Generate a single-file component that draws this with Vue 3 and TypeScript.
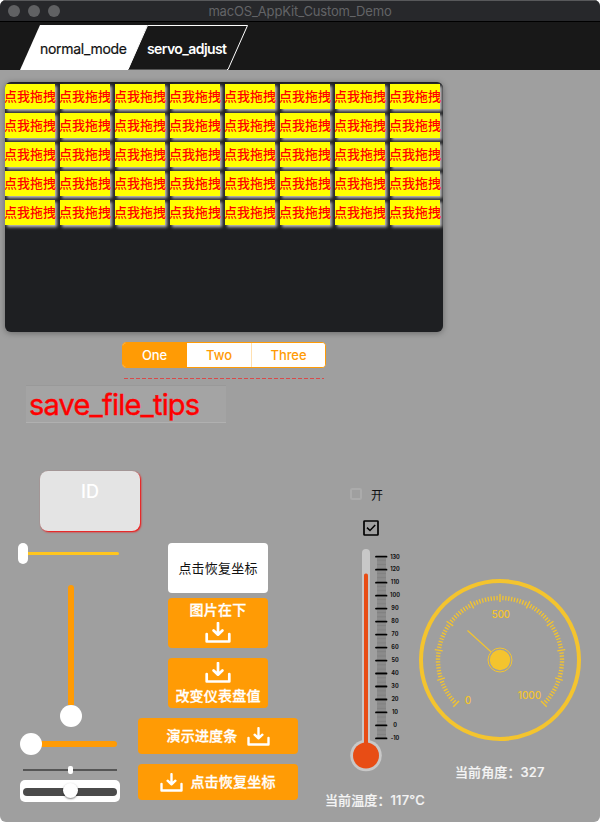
<script setup lang="ts">
import { ref } from 'vue'

interface Tick {
  pos: number
  major: boolean
}

const cells = Array.from({ length: 40 }, (_, i) => i)
const segments = ['One', 'Two', 'Three']
const activeSegment = ref(0)

const temperature = ref(117)
const angle = ref(327)

const thermoTicks: Tick[] = Array.from({ length: 141 }, (_, i) => ({
  pos: 11.7 + i * 1.298,
  major: i % 10 === 0,
}))
const thermoLabels = Array.from({ length: 15 }, (_, i) => ({
  text: String(130 - i * 10),
  y: 13.5 + i * 12.98,
}))
const dialTicks: Tick[] = Array.from({ length: 101 }, (_, i) => ({
  pos: -135 + i * 2.7,
  major: i % 10 === 0,
}))
</script>

<template>
  <div class="window">
    <header class="titlebar">
      <div class="lights"><i></i><i></i><i></i></div>
      <span class="title">macOS_AppKit_Custom_Demo</span>
    </header>

    <nav class="tabs">
      <svg width="260" height="48" viewBox="0 0 260 48">
        <polygon points="147.5,3.5 247.5,3.5 228,47.5 128,47.5" fill="#181818" stroke="#fff" stroke-width="1" />
        <path d="M128 47.5H227" stroke="#555" stroke-width="1" />
        <polygon points="20,48 40,3 147.5,3 128,48" fill="#fff" />
        <text x="40" y="32" textLength="87" class="tab-on">normal_mode</text>
        <text x="147" y="32" textLength="80" class="tab-off">servo_adjust</text>
      </svg>
    </nav>

    <main class="content">
      <section class="panel">
        <div v-for="c in cells" :key="c" class="cell"><span>点我拖拽</span></div>
      </section>

      <div class="segmented">
        <button
          v-for="(s, i) in segments"
          :key="s"
          :class="['segment', { active: i === activeSegment }]"
          @click="activeSegment = i"
        >{{ s }}</button>
      </div>
      <svg class="dashes" width="200" height="1"><path d="M0 .5H200" stroke="#d84a4a" stroke-dasharray="4 2" /></svg>

      <div class="tips">save_file_tips</div>

      <section class="lower">
        <div class="sliders">
          <div class="id-card">ID</div>
          <div class="slider pill"><span class="knob"></span><span class="track"></span></div>
          <div class="slider vertical"><span class="track"></span><span class="knob"></span></div>
          <div class="slider round"><span class="knob"></span><span class="track"></span></div>
          <div class="slider thin"><span class="track"></span><span class="knob"></span><span class="track"></span></div>
          <div class="slider boxed"><span class="track"><span class="knob"></span></span></div>
        </div>

        <div class="buttons">
          <button class="btn plain">点击恢复坐标</button>
          <button class="btn square text-top">
            <span>图片在下</span>
            <svg class="icon" width="26" height="21" viewBox="0 0 26 21"><path d="M1.7 12V19.5H24.3V12M13 1V12.5M8.6 8.5L13 12.7L17.4 8.5" /></svg>
          </button>
          <button class="btn square text-bottom">
            <svg class="icon" width="26" height="21" viewBox="0 0 26 21"><path d="M1.7 12V19.5H24.3V12M13 1V12.5M8.6 8.5L13 12.7L17.4 8.5" /></svg>
            <span>改变仪表盘值</span>
          </button>
          <button class="btn wide">
            <span>演示进度条</span>
            <svg class="icon" width="23" height="19" viewBox="0 0 26 21"><path d="M1.7 12V19.5H24.3V12M13 1V12.5M8.6 8.5L13 12.7L17.4 8.5" /></svg>
          </button>
          <button class="btn wide last">
            <svg class="icon" width="23" height="19" viewBox="0 0 26 21"><path d="M1.7 12V19.5H24.3V12M13 1V12.5M8.6 8.5L13 12.7L17.4 8.5" /></svg>
            <span>点击恢复坐标</span>
          </button>
        </div>

        <div class="thermo">
          <label class="switch"><i></i><span>开</span></label>
          <svg class="check" width="16" height="16" viewBox="0 0 16 16">
            <rect x="1" y="1" width="14" height="14" rx=".6" fill="none" stroke="#000" stroke-width="1.7" />
            <path d="M4 7.6L7 10.5L12.2 5.1" fill="none" stroke="#000" stroke-width="1.5" />
          </svg>
          <svg class="thermometer" width="60" height="230" viewBox="0 0 60 230">
            <rect x="17" y="4" width="8" height="200" rx="4" fill="#c8c8c8" />
            <circle cx="21" cy="210.5" r="15.8" fill="#c8c8c8" />
            <rect x="19" y="28.5" width="4" height="180" rx="1.8" fill="#e84d15" />
            <circle cx="21" cy="210.5" r="13" fill="#e84d15" />
            <line
              v-for="(t, i) in thermoTicks"
              :key="i"
              :x1="t.major ? 31 : 32"
              :x2="t.major ? 41.5 : 41"
              :y1="t.pos"
              :y2="t.pos"
              :class="t.major ? 'tmajor' : 'tminor'"
            />
            <text v-for="l in thermoLabels" :key="l.text" x="50" :y="l.y" class="tlabel">{{ l.text }}</text>
          </svg>
          <p class="caption">当前温度：{{ temperature }}°C</p>
        </div>

        <div class="dial">
          <svg width="164" height="164" viewBox="-82 -82 164 164">
            <circle r="79" fill="none" stroke="#f4c42e" stroke-width="4" />
            <line
              v-for="(t, i) in dialTicks"
              :key="i"
              x1="0"
              x2="0"
              :y1="t.major ? -66 : -64.2"
              :y2="t.major ? -58 : -59.8"
              :transform="`rotate(${t.pos})`"
              stroke="#f4c42e"
              :stroke-width="t.major ? 1.4 : 1.3"
            />
            <path d="M0 0L-32.5 -29.5" stroke="#f4c42e" stroke-width="1.2" />
            <circle r="12" fill="#9f9f9f" stroke="#f4c42e" stroke-width="1" />
            <circle r="10.2" fill="#f4c42e" />
            <text x="0.8" y="-42" textLength="18.5">500</text>
            <text x="-32" y="43.5">0</text>
            <text x="29.5" y="38.5" textLength="23.5">1000</text>
          </svg>
          <p class="caption">当前角度：{{ angle }}</p>
        </div>
      </section>
    </main>
  </div>
</template>

<style>
body {
  background: #fff;
}
</style>

<style scoped>
.window {
  width: 600px;
  height: 822px;
  overflow: hidden;
  border-radius: 6px;
  background: #9f9f9f;
  font-family: Inter, "Noto Sans CJK SC", sans-serif;
  display: flex;
  flex-direction: column;
}
.titlebar {
  height: 22px;
  box-sizing: border-box;
  background: #27282b;
  border-top: 1px solid #58595b;
  border-bottom: 1px solid #000;
  display: grid;
  grid-template-columns: 68px 1fr 68px;
  align-items: center;
}
.lights {
  display: flex;
  gap: 8px;
  padding-left: 8px;
}
.lights i {
  width: 12px;
  height: 12px;
  border-radius: 50%;
  background: #606163;
}
.title {
  text-align: center;
  font-size: 13px;
  line-height: 20px;
  color: #636467;
  letter-spacing: -0.15px;
}
.tabs {
  height: 48px;
  background: #181818;
}
.tabs svg {
  display: block;
}
.tabs text {
  font-size: 14px;
}
.tab-on {
  fill: #111;
  stroke: #111;
  stroke-width: 0.2px;
}
.tab-off {
  fill: #fff;
  font-weight: 600;
}
.content {
  flex: 1;
  display: flex;
  flex-direction: column;
  align-items: flex-start;
}
.panel {
  width: 438px;
  height: 250px;
  box-sizing: border-box;
  margin: 12px 0 0 5px;
  padding-top: 2px;
  border-radius: 6px;
  overflow: hidden;
  background: #1e1f22;
  box-shadow: 0 1px 6px rgba(0, 0, 0, 0.35);
  display: grid;
  grid-template-columns: repeat(8, 50px);
  grid-auto-rows: 25px;
  gap: 4px 5px;
  align-content: start;
}
.cell {
  background: #ff0;
  box-shadow: 2px 2px 3px #c4c4c4;
  color: #f00;
  font-size: 13px;
  font-weight: 500;
  line-height: 25px;
  white-space: nowrap;
  display: flex;
  justify-content: center;
}
.segmented {
  width: 204px;
  height: 26px;
  box-sizing: border-box;
  margin: 10px 0 0 122px;
  border: 1px solid #ff9b05;
  border-radius: 4px;
  overflow: hidden;
  background: #fff;
  display: grid;
  grid-template-columns: 64px 65px 1fr;
}
.segment {
  padding: 0;
  border: 0;
  border-right: 1px solid #ffe0b0;
  background: #fff;
  color: #ff9b05;
  font: 500 13px/24px Inter, sans-serif;
  letter-spacing: -0.1px;
}
.segment:last-child {
  border-right: 0;
}
.segment.active {
  background: #ff9b05;
  border-right-color: #ff9b05;
  color: #fff;
}
.dashes {
  display: block;
  margin: 10px 0 0 124px;
}
.tips {
  width: 200px;
  height: 38px;
  box-sizing: border-box;
  margin: 6px 0 0 26px;
  padding-left: 3px;
  background: #a4a4a4;
  border-top: 1px solid #999;
  border-bottom: 1px solid #b0b0b0;
  color: #f00;
  font-size: 29px;
  line-height: 37px;
  letter-spacing: -0.8px;
  -webkit-text-stroke: 0.4px #f00;
}
.lower {
  width: 600px;
  height: 374px;
  margin-top: 25px;
  display: grid;
  grid-template-columns: 138px 160px 120px 182px;
}
.sliders {
  display: flex;
  flex-direction: column;
  align-items: flex-start;
  padding-top: 23px;
}
.id-card {
  width: 100px;
  height: 60px;
  flex: none;
  margin-left: 40px;
  border-radius: 8px;
  background: #e4e4e4;
  box-shadow: 1px 1px 2px #f00;
  color: #fff;
  font-size: 18px;
  font-weight: 500;
  line-height: 42px;
  text-align: center;
}
.slider {
  display: flex;
  align-items: center;
}
.knob {
  flex: none;
  background: #fff;
}
.pill {
  margin: 12px 0 0 18px;
}
.pill .knob {
  width: 10px;
  height: 21px;
  border-radius: 5px;
}
.pill .track {
  width: 91px;
  height: 3px;
  border-radius: 0 2px 2px 0;
  background: #ffc61e;
}
.vertical {
  flex-direction: column;
  margin: 21px 0 0 60px;
}
.vertical .track {
  width: 6px;
  height: 120px;
  border-radius: 3px 3px 0 0;
  background: #ff9b05;
}
.vertical .knob,
.round .knob {
  width: 22px;
  height: 22px;
  border-radius: 50%;
}
.round {
  margin: 6px 0 0 20px;
}
.round .knob {
  z-index: 1;
}
.round .track {
  width: 78px;
  height: 6px;
  margin-left: -3px;
  border-radius: 0 3px 3px 0;
  background: #ff9b05;
}
.thin {
  margin: 11px 0 0 23px;
}
.thin .track {
  width: 44.5px;
  height: 2px;
  background: #555;
}
.thin .knob {
  width: 5px;
  height: 8px;
  border-radius: 2px;
}
.boxed {
  width: 100px;
  height: 22px;
  margin: 6px 0 0 20px;
  border-radius: 5px;
  background: #fff;
  justify-content: center;
}
.boxed .track {
  width: 94px;
  height: 8px;
  margin-top: 2px;
  border-radius: 4px;
  background: #4b4b4b;
  display: flex;
  align-items: center;
  justify-content: center;
}
.boxed .knob {
  width: 15px;
  height: 15px;
  margin-top: -3px;
  border-radius: 50%;
  box-shadow: 0 1px 2px rgba(0, 0, 0, 0.5);
}
.buttons {
  padding-top: 95px;
  display: flex;
  flex-direction: column;
  align-items: center;
}
.btn {
  flex: none;
  box-sizing: border-box;
  padding: 0;
  border: 0;
  border-radius: 4px;
  background: #ff9b05;
  color: #fff;
  font: 500 14px/20px Inter, "Noto Sans CJK SC", sans-serif;
  letter-spacing: 0.2px;
  -webkit-text-stroke: 0.3px currentColor;
  display: flex;
  align-items: center;
  justify-content: center;
}
.icon {
  fill: none;
  stroke: #fff;
  stroke-width: 2.7;
  stroke-linejoin: round;
  stroke-linecap: round;
}
.plain {
  width: 100px;
  height: 50px;
  background: #fff;
  color: #111;
  font-size: 13px;
  font-weight: 400;
  -webkit-text-stroke-width: 0;
}
.square {
  width: 100px;
  height: 50px;
  flex-direction: column;
}
.text-top {
  margin-top: 5px;
  gap: 2px;
  justify-content: flex-start;
  padding-top: 2px;
}
.text-bottom {
  margin-top: 10px;
  gap: 3px;
  justify-content: flex-start;
  padding-top: 4px;
}
.wide {
  width: 160px;
  height: 36px;
  margin-top: 10px;
  gap: 9px;
}
.last {
  gap: 7px;
}
.thermo {
  padding-top: 37px;
}
.switch {
  display: flex;
  align-items: center;
  height: 18px;
  margin-left: 52px;
  gap: 9px;
  font-size: 12px;
  color: #111;
}
.switch i {
  width: 12px;
  height: 12px;
  box-sizing: border-box;
  border: 2px solid #ababab;
  border-radius: 2px;
}
.check {
  display: block;
  margin: 17px 0 0 65px;
}
.thermometer {
  display: block;
  margin: 9px 0 0 47px;
}
.tmajor {
  stroke: #000;
  stroke-width: 1.8;
  stroke-linecap: round;
}
.tminor {
  stroke: #555;
  stroke-width: 0.4;
}
.tlabel {
  font: 700 5.5px Inter, sans-serif;
  fill: #111;
  text-anchor: middle;
}
.caption {
  margin: 0;
  color: #f4f4f4;
  font-size: 13px;
  font-weight: 500;
  line-height: 20px;
  letter-spacing: 0.12px;
  white-space: nowrap;
  -webkit-text-stroke: 0.2px currentColor;
}
.thermo .caption {
  margin: 15px 0 0 27px;
}
.dial {
  padding-top: 130px;
}
.dial svg {
  display: block;
}
.dial text {
  font: 500 10px Inter, sans-serif;
  fill: #f4c42e;
  text-anchor: middle;
}
.dial .caption {
  margin: 20px 0 0 37px;
}
</style>
